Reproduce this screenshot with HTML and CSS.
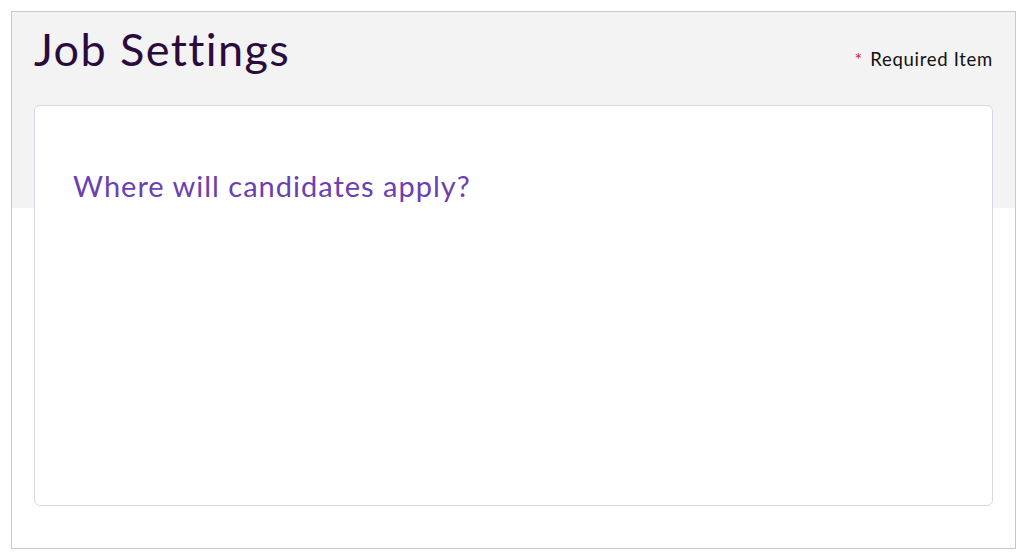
FILE: index.html
```html
<!DOCTYPE html>
<html lang="en">
<head>
    <meta charset="UTF-8">
    <meta name="viewport" content="width=device-width, initial-scale=1.0">
    <title>Job Settings</title>
    <link rel="stylesheet" href="styles.css">
</head>
<body>
    <div class="frame">
        <div class="header">
            <h1>Job Settings</h1>
            <span class="required"><span class="star">*</span> Required Item</span>
        </div>
        <div class="card">
            <h2>Where will candidates apply?</h2>
        </div>
    </div>
</body>
</html>
```

FILE: styles.css
```css
body {
    margin: 11px 0 0 11px;
    font-family: Lato, "Open Sans", sans-serif;
    background-color: #ffffff;
}
.frame {
    border: 1px solid #c8c8cc;
    width: 1005px;
    height: 538px;
    box-sizing: border-box;
    padding: 0 22px;
    background: linear-gradient(#f3f3f3 196px, #ffffff 196px);
}
.header {
    display: flex;
    justify-content: space-between;
    align-items: baseline;
    height: 93px;
}
.header h1 {
    margin: 0;
    padding-top: 10px;
    font-size: 45px;
    font-weight: 400;
    letter-spacing: 1.4px;
    color: #2a0b3d;
}
.required {
    font-size: 18.5px;
    letter-spacing: 0.7px;
    color: #111111;
}
.star {
    color: #e0202a;
    font-size: 18px;
    margin-right: 2px;
}
.card {
    background-color: #ffffff;
    border: 1px solid #d9d5e6;
    border-radius: 6px;
    height: 401px;
    box-sizing: border-box;
    padding: 62px 38px;
}
.card h2 {
    margin: 0;
    font-size: 29px;
    font-weight: 400;
    letter-spacing: 1px;
    color: #6a40b2;
}
```
